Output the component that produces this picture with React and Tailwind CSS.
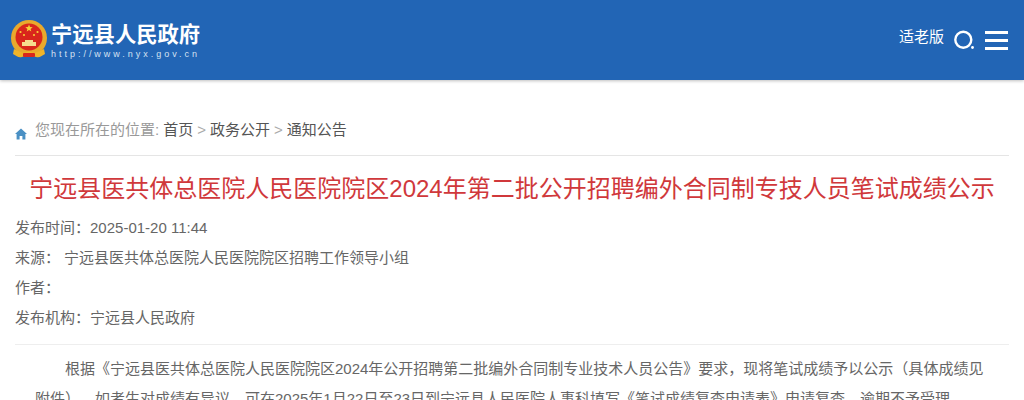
const font = { fontFamily: '"Liberation Sans","Noto Sans CJK SC",sans-serif' };

function Emblem() {
  return (
    <svg width="38" height="40" viewBox="0 0 38 40" className="shrink-0">
      <circle cx="19" cy="18" r="18" fill="#e9a92c" />
      <circle cx="19" cy="17" r="13.5" fill="#d9261c" />
      <path d="M16 5l1 2.6 2.7.1-2.1 1.7.7 2.6-2.3-1.5-2.3 1.5.7-2.6-2.1-1.7 2.7-.1z" transform="translate(3 -0.5)" fill="#f7d038" />
      <circle cx="10.5" cy="12" r="1.1" fill="#f7d038" />
      <circle cx="14" cy="15" r="1.1" fill="#f7d038" />
      <circle cx="24" cy="15" r="1.1" fill="#f7d038" />
      <circle cx="27.5" cy="12" r="1.1" fill="#f7d038" />
      <path d="M12 26v-4h3v-2h8v2h3v4z" fill="#f6dc8e" />
      <path d="M4 29c5 2 8 6 15 2 7 4 10 0 15-2l1 5c-4 2-5 4-9 3-3-1-5-2-7-2s-4 1-7 2c-4 1-5-1-9-3z" fill="#f0b429" />
      <rect x="13" y="33" width="12" height="4" rx="1" fill="#d9261c" />
    </svg>
  );
}

function Logo() {
  return (
    <div className="flex items-center gap-[3px]">
      <Emblem />
      <div className="flex flex-col pt-[2px]">
        <span className="text-[21.3px] leading-[26px] font-bold text-white whitespace-nowrap">宁远县人民政府</span>
        <span className="text-[9px] leading-[12px] tracking-[2.98px] text-[#d5e2f2] whitespace-nowrap">http://www.nyx.gov.cn</span>
      </div>
    </div>
  );
}

function Header() {
  return (
    <header className="h-20 bg-[#2265b5] shadow-[0_1px_3px_rgba(0,0,0,0.25)] flex items-center justify-between pl-[10px] pr-[16px]">
      <Logo />
      <div className="flex items-center">
        <span className="text-[15px] text-white leading-5 mr-[10px] mb-[6px]">适老版</span>
        <svg width="21" height="21" viewBox="0 0 21 21" className="mr-[10px]">
          <circle cx="9.3" cy="9.8" r="8" fill="none" stroke="#fff" strokeWidth="2.4" />
          <circle cx="18.5" cy="17.5" r="1.4" fill="#fff" />
        </svg>
        <div className="flex flex-col gap-[5px] w-[23px]">
          <div className="h-[3px] bg-white" />
          <div className="h-[3px] bg-white" />
          <div className="h-[3px] bg-white" />
        </div>
      </div>
    </header>
  );
}

function Crumb() {
  return (
    <nav className="h-[76px] pt-[40px] border-b border-[#e5e5e5] flex items-start text-[15px] leading-5 whitespace-nowrap">
      <svg width="12" height="12" viewBox="0 0 12 12" className="mt-[8px] mr-[8px] shrink-0">
        <path d="M6 0.5L0 6h1.6v5.5h3V8h2.8v3.5h3V6H12z" fill="#4a90c4" />
      </svg>
      <span className="text-[#999]">您现在所在的位置:</span>
      <span className="text-[#555] ml-1">首页</span>
      <span className="text-[#aaa] mx-[4px]">&gt;</span>
      <span className="text-[#555]">政务公开</span>
      <span className="text-[#aaa] mx-[4px]">&gt;</span>
      <span className="text-[#555]">通知公告</span>
    </nav>
  );
}

function Meta({ label, value, gap }) {
  return (
    <div className="h-[30px] leading-[30px] flex whitespace-nowrap">
      <span>{label}</span>
      <span className={gap}>{value}</span>
    </div>
  );
}

export default function App() {
  return (
    <div style={font} className="h-[400px] w-[1024px] overflow-hidden bg-white">
      <Header />
      <main className="px-[15px]">
        <Crumb />
        <h1 className="text-center text-[24px] leading-8 text-[#d0383b] font-normal pt-[17px] whitespace-nowrap">
          宁远县医共体总医院人民医院院区2024年第二批公开招聘编外合同制专技人员笔试成绩公示
        </h1>
        <div className="mt-[8px] pb-[11px] border-b border-[#eeeeee] text-[15px] text-[#666]">
          <Meta label="发布时间：" value="2025-01-20 11:44" gap="" />
          <Meta label="来源：" value="宁远县医共体总医院人民医院院区招聘工作领导小组" gap="ml-[4px]" />
          <Meta label="作者：" value="" gap="" />
          <Meta label="发布机构：" value="宁远县人民政府" gap="" />
        </div>
        <article className="text-[15px] leading-[30px] text-[#666] px-5 pt-[9px]">
          <p className="indent-[30px] [text-spacing-trim:space-all]">
            根据《宁远县医共体总医院人民医院院区2024年公开招聘第二批编外合同制专业技术人员公告》要求，现将笔试成绩予以公示（具体成绩见附件）。如考生对成绩有异议，可在2025年1月22日至23日到宁远县人民医院人事科填写《笔试成绩复查申请表》申请复查，逾期不予受理。
          </p>
        </article>
      </main>
    </div>
  );
}
